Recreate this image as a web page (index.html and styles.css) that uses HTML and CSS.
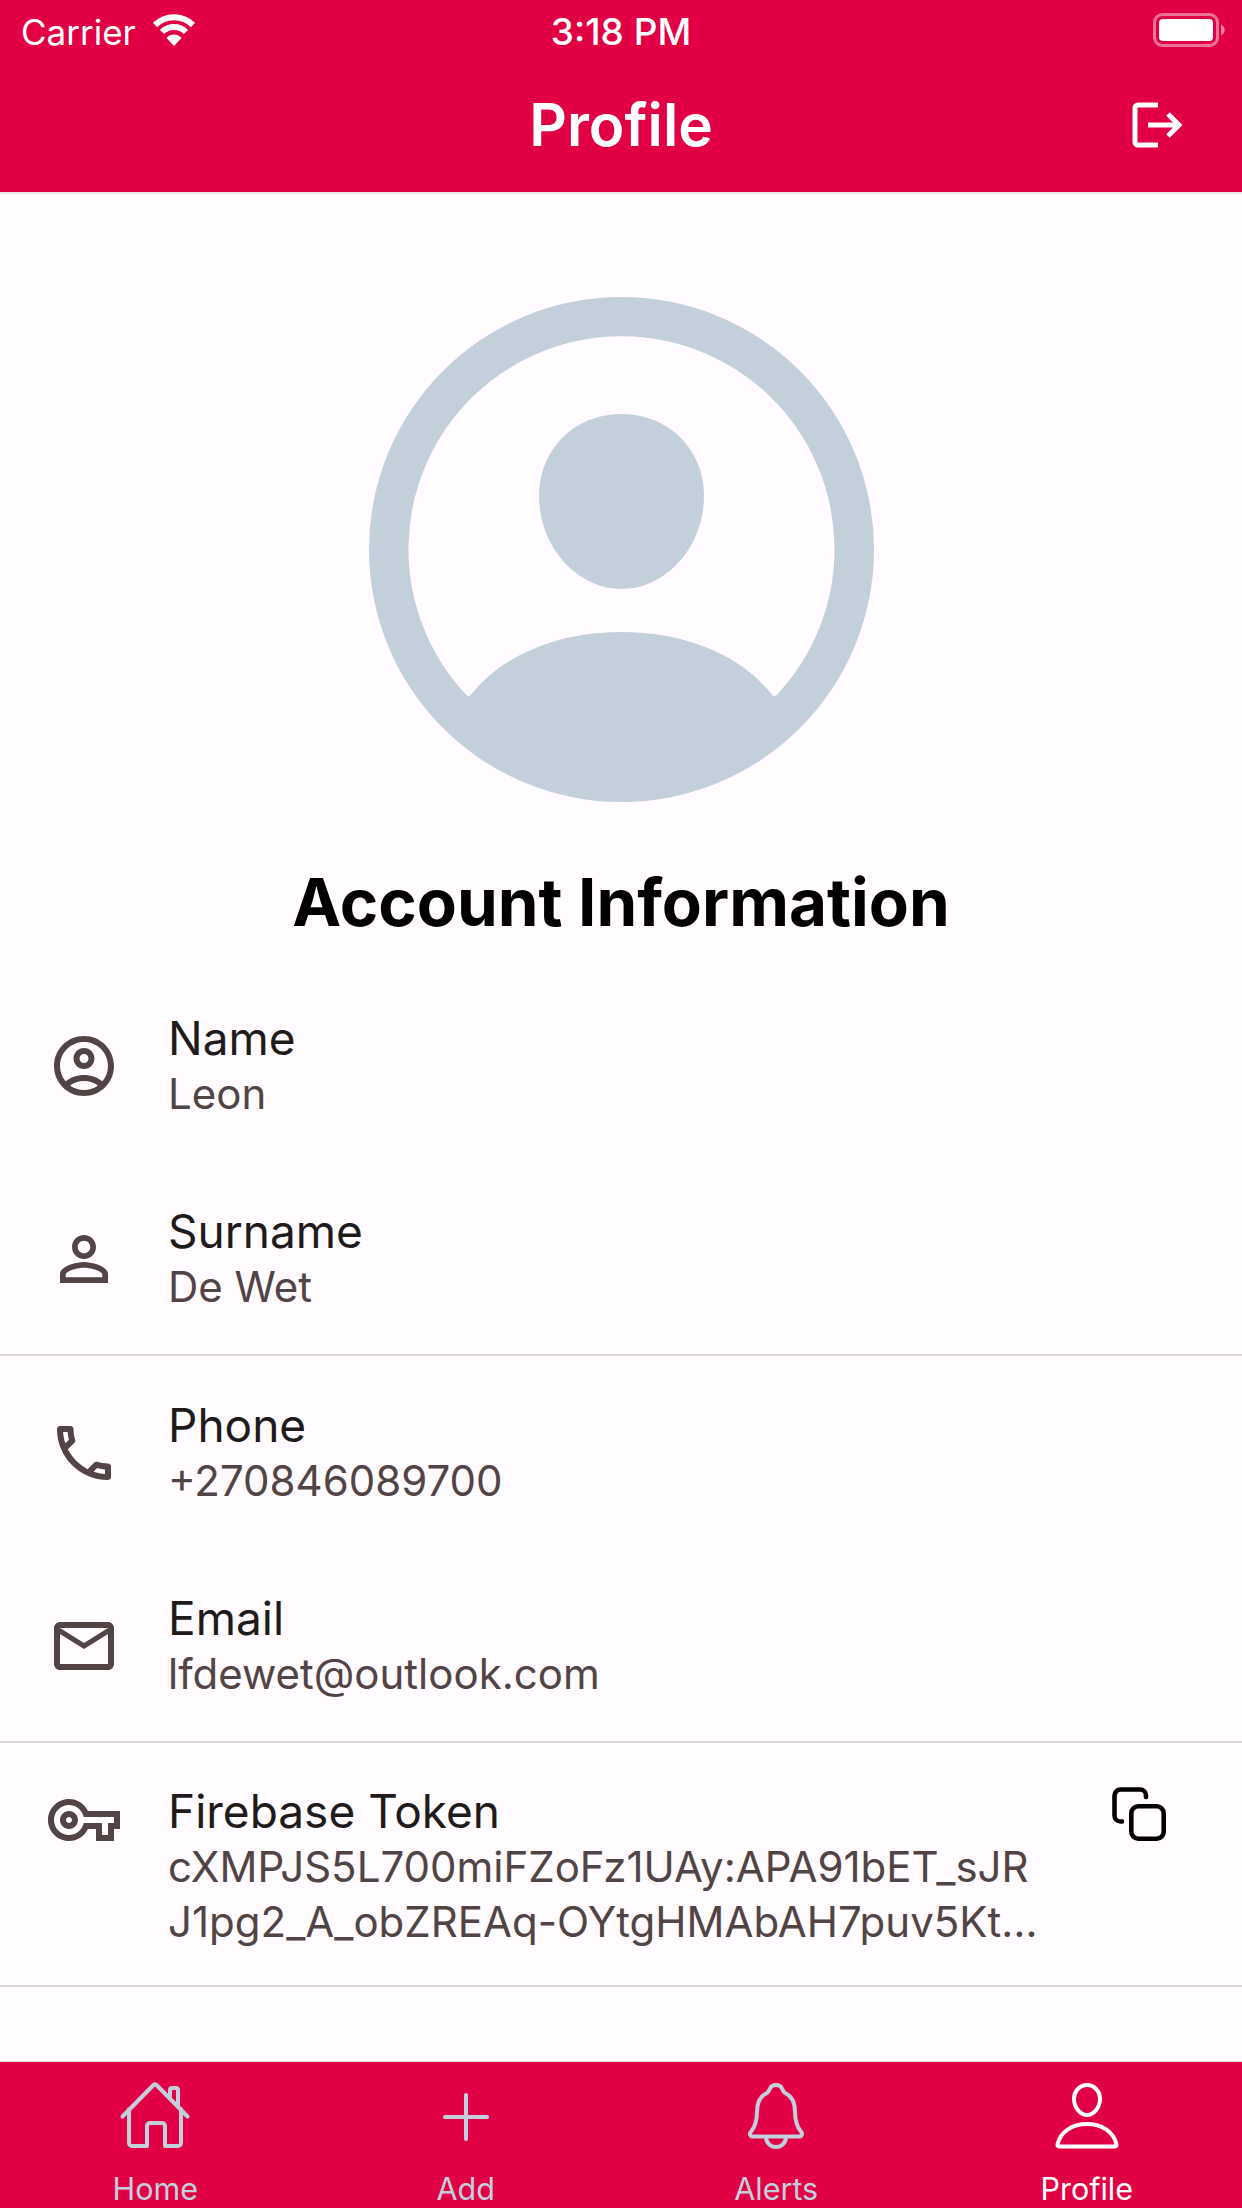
FILE: index.html
```html
<!DOCTYPE html>
<html lang="en">
<head>
<meta charset="utf-8">
<title>Profile</title>
<link rel="stylesheet" href="styles.css">
</head>
<body>
<div class="app">
  <header class="appbar">
    <div class="status">
      <div class="status-left">
        <span>Carrier</span>
        <svg class="wifi" viewBox="0 0 44 32" fill="none" stroke="#fff" stroke-width="6"><path d="M3 11A27 27 0 0 1 41 11"/><path d="M10 18A17 17 0 0 1 34 18"/><path d="M22 32L14.500 24A10 10 0 0 1 29.500 24Z" fill="#fff" stroke="none"/></svg>
      </div>
      <div class="status-time">3:18 PM</div>
      <svg class="battery" viewBox="0 0 73 34" fill="none"><rect x="1.500" y="1.500" width="63" height="31" rx="8" stroke="#fff" stroke-opacity=".45" stroke-width="3"/><rect x="6" y="6" width="54" height="22" rx="4" fill="#fff"/><path d="M68 11.500a6 6 0 0 1 0 11z" fill="#fff" fill-opacity=".5"/></svg>
    </div>
    <div class="titlebar">
      <span></span>
      <h1 class="page-title">Profile</h1>
      <svg class="logout" viewBox="0 0 60 60" fill="none" stroke="#fff" stroke-width="5"><path d="M30 10H10a3 3 0 0 0-3 3V47a3 3 0 0 0 3 3H30"/><path d="M20 30H51M40 19L51 30L40 41"/></svg>
    </div>
  </header>

  <main class="content">
    <svg class="avatar" viewBox="0 0 505 505">
      <circle cx="252.500" cy="252.500" r="252.500" fill="#c3d0db"/>
      <path d="M99.500 396A210 210 0 1 1 405.500 396C370 351 310 332 252.500 332C195 332 135 351 99.500 396Z" fill="#fffbff" stroke="#fffbff" stroke-width="6" stroke-linejoin="round"/>
      <path d="M252.500 117C300 117 335 153 335 199C335 250 297 292 252.500 292C208 292 170 250 170 199C170 153 205 117 252.500 117Z" fill="#c3d0db"/>
    </svg>
    <h2 class="section-title">Account Information</h2>

    <section class="group">
      <div class="row">
        <svg class="icon" viewBox="0 0 24 24"><path d="M12 2C6.480 2 2 6.480 2 12s4.480 10 10 10 10-4.480 10-10S17.520 2 12 2zM7.350 18.500C8.660 17.560 10.260 17 12 17s3.340.56 4.650 1.500C15.340 19.440 13.740 20 12 20s-3.340-.56-4.650-1.500zm10.790-1.380C16.450 15.800 14.320 15 12 15s-4.450.8-6.140 2.120C4.700 15.730 4 13.950 4 12c0-4.420 3.580-8 8-8s8 3.580 8 8c0 1.950-.7 3.730-1.860 5.120zM12 6c-1.930 0-3.500 1.570-3.500 3.500S10.070 13 12 13s3.500-1.570 3.500-3.500S13.930 6 12 6zm0 5c-.83 0-1.500-.67-1.500-1.500S11.170 8 12 8s1.500.67 1.500 1.500S12.830 11 12 11z"/></svg>
        <div class="text"><div class="label">Name</div><div class="value">Leon</div></div>
      </div>
      <div class="row row-last">
        <svg class="icon" viewBox="0 0 24 24"><path d="M12 5.900c1.160 0 2.100.94 2.100 2.100s-.94 2.100-2.100 2.100S9.900 9.160 9.900 8s.94-2.100 2.100-2.100m0 9c2.970 0 6.100 1.460 6.100 2.100v1.100H5.900V17c0-.64 3.130-2.100 6.100-2.100M12 4C9.790 4 8 5.790 8 8s1.790 4 4 4 4-1.790 4-4-1.790-4-4-4zm0 9c-2.670 0-8 1.340-8 4v3h16v-3c0-2.660-5.330-4-8-4z"/></svg>
        <div class="text"><div class="label">Surname</div><div class="value">De Wet</div></div>
      </div>
    </section>

    <section class="group">
      <div class="row">
        <svg class="icon" viewBox="0 0 24 24"><path d="M6.540 5c.06.89.21 1.760.45 2.590l-1.200 1.200c-.41-1.200-.67-2.470-.76-3.790h1.510m9.860 12.020c.85.24 1.720.39 2.600.45v1.490c-1.320-.09-2.590-.35-3.800-.75l1.200-1.190M7.500 3H4c-.55 0-1 .45-1 1 0 9.390 7.610 17 17 17 .55 0 1-.45 1-1v-3.490c0-.55-.45-1-1-1-1.240 0-2.450-.2-3.570-.57-.1-.04-.21-.05-.31-.05-.26 0-.51.1-.71.29l-2.200 2.200c-2.830-1.450-5.150-3.760-6.590-6.590l2.200-2.200c.28-.28.36-.67.25-1.020C8.700 6.450 8.500 5.250 8.500 4c0-.55-.45-1-1-1z"/></svg>
        <div class="text"><div class="label">Phone</div><div class="value">+270846089700</div></div>
      </div>
      <div class="row row-last">
        <svg class="icon" viewBox="0 0 24 24"><path d="M22 6c0-1.100-.9-2-2-2H4c-1.100 0-2 .9-2 2v12c0 1.100.9 2 2 2h16c1.100 0 2-.9 2-2V6zm-2 0l-8 5-8-5h16zm0 12H4V8l8 5 8-5v10z"/></svg>
        <div class="text"><div class="label">Email</div><div class="value">lfdewet@outlook.com</div></div>
      </div>
    </section>

    <section class="group">
      <div class="row row-top">
        <svg class="icon" viewBox="0 0 24 24"><path d="M22 19h-6v-4h-2.680c-1.140 2.420-3.600 4-6.320 4-3.860 0-7-3.140-7-7s3.140-7 7-7c2.720 0 5.170 1.580 6.320 4H24v6h-2v4zm-4-2h2v-4h2v-2H11.940l-.23-.67C11.010 8.340 9.110 7 7 7c-2.760 0-5 2.240-5 5s2.240 5 5 5c2.110 0 4.010-1.340 4.710-3.330l.23-.67H18v4zM7 15c-1.650 0-3-1.350-3-3s1.350-3 3-3 3 1.350 3 3-1.350 3-3 3zm0-4c-.55 0-1 .45-1 1s.45 1 1 1 1-.45 1-1-.45-1-1-1z"/></svg>
        <div class="text">
          <div class="label">Firebase Token</div>
          <div class="value">cXMPJS5L700miFZoFz1UAy:APA91bET_sJR</div>
          <div class="value">J1pg2_A_obZREAq-OYtgHMAbAH7puv5Kt…</div>
        </div>
        <svg class="copy" viewBox="0 0 60 60" fill="none" stroke="#000" stroke-width="4.600" stroke-linecap="round"><rect x="21.300" y="21.300" width="32.400" height="32.400" rx="7"/><path d="M12 36.500H10.500a6 6 0 0 1-6-6V10.500a6 6 0 0 1 6-6H30a6 6 0 0 1 6 6V12"/></svg>
      </div>
    </section>
  </main>

  <nav class="tabbar">
    <div class="tab">
      <svg class="tab-icon" viewBox="0 0 72 72"><path d="M3.500 36.500L34.500 5Q36 3.800 37.500 5L68.500 36.500M10 29V63a3 3 0 0 0 3 3H28V46a3 3 0 0 1 3-3H43a3 3 0 0 1 3 3V66H59a3 3 0 0 0 3-3V29M51 17V10a2 2 0 0 1 2-2H57a2 2 0 0 1 2 2V26"/></svg>
      <span class="tab-label">Home</span>
    </div>
    <div class="tab">
      <svg class="tab-icon" viewBox="0 0 72 72"><path d="M36 15V59M15 37H57"/></svg>
      <span class="tab-label">Add</span>
    </div>
    <div class="tab">
      <svg class="tab-icon" viewBox="0 0 72 72"><path d="M12 56.500H60a2.500 2.500 0 0 0 1.500-4C56 46 55 40 55 32C55 22 52 16 45 13C43 12 43 10 42 8.500C40.500 5 38 5 36 5C34 5 31.500 5 30 8.500C29 10 29 12 27 13C20 16 17 22 17 32C17 40 16 46 10.500 52.500a2.500 2.500 0 0 0 1.500 4ZM26 57a10 10 0 0 0 20 0"/></svg>
      <span class="tab-label">Alerts</span>
    </div>
    <div class="tab tab-active">
      <svg class="tab-icon" viewBox="0 0 72 72"><path d="M36 5C43 5 49 11 49 19C49 27 43 35 36 35C29 35 23 27 23 19C23 11 29 5 36 5Z"/><path d="M8 66.500H64a1.500 1.500 0 0 0 1.500-2C63 52 51 44 36 44C21 44 9 52 6.500 64.500a1.500 1.500 0 0 0 1.500 2Z"/></svg>
      <span class="tab-label">Profile</span>
    </div>
  </nav>
</div>
</body>
</html>
```
FILE: styles.css
```css
* { box-sizing: border-box; }
html, body { margin: 0; padding: 0; }
body { font-family: Inter, "Liberation Sans", sans-serif; background: #fffbff; }

.app {
  width: 1242px;
  height: 2208px;
  display: flex;
  flex-direction: column;
  overflow: hidden;
}

.appbar {
  height: 192px;
  background: #e10044;
  color: #fff;
  flex: none;
}
.status {
  height: 60px;
  padding: 13px 16px 0;
  display: grid;
  grid-template-columns: 1fr auto 1fr;
  align-items: start;
}
.status-left {
  display: flex;
  align-items: flex-start;
  gap: 16px;
  padding-left: 5px;
  font-size: 35px;
  line-height: 38px;
}
.wifi { width: 44px; height: 32px; margin-top: 1px; }
.status-time { font-size: 37px; line-height: 38px; font-weight: 500; }
.battery { width: 73px; height: 34px; justify-self: end; }

.titlebar {
  height: 132px;
  padding: 0 54px 2px;
  display: grid;
  grid-template-columns: 1fr auto 1fr;
  align-items: center;
}
.page-title { margin: 0; font-size: 58.500px; line-height: 72px; font-weight: 600; }
.logout { width: 60px; height: 60px; justify-self: end; }

.content {
  flex: 1;
  border-top: 2px solid #ece5e8;
  display: flex;
  flex-direction: column;
  padding-top: 103px;
}
.avatar { width: 505px; height: 505px; display: block; align-self: center; flex: none; }
.section-title {
  margin: 61px 0 26px;
  text-align: center;
  font-size: 65.500px;
  line-height: 80px;
  font-weight: 700;
  color: #000;
}

.group { border-bottom: 2px solid #dcd3d5; }
.row {
  height: 194px;
  padding: 0 72px 0 48px;
  display: flex;
  align-items: center;
  gap: 48px;
}
.row.row-last { height: 191px; }
.row.row-top { height: 242px; padding-top: 41px; align-items: flex-start; }
.icon { width: 72px; height: 72px; fill: #524345; flex: none; }
.text { flex: 1; min-width: 0; }
.label { font-size: 46px; line-height: 55px; color: #201a1b; }
.value { font-size: 42px; line-height: 55px; color: #524345; white-space: nowrap; }
.copy { width: 60px; height: 60px; flex: none; margin-top: 1px; }

.tabbar {
  height: 147px;
  flex: none;
  background: #e10044;
  border-top: 1px solid #e6dcdf;
  display: grid;
  grid-template-columns: repeat(4, 1fr);
}
.tab {
  display: flex;
  flex-direction: column;
  align-items: center;
  padding-top: 18px;
  color: #c3d0db;
}
.tab-icon {
  width: 72px;
  height: 72px;
  flex: none;
  fill: none;
  stroke: currentColor;
  stroke-width: 4;
  stroke-linecap: round;
  stroke-linejoin: round;
}
.tab-label { font-size: 30.500px; line-height: 36px; margin-top: 19px; }
.tab-active { color: #fff; }
```
